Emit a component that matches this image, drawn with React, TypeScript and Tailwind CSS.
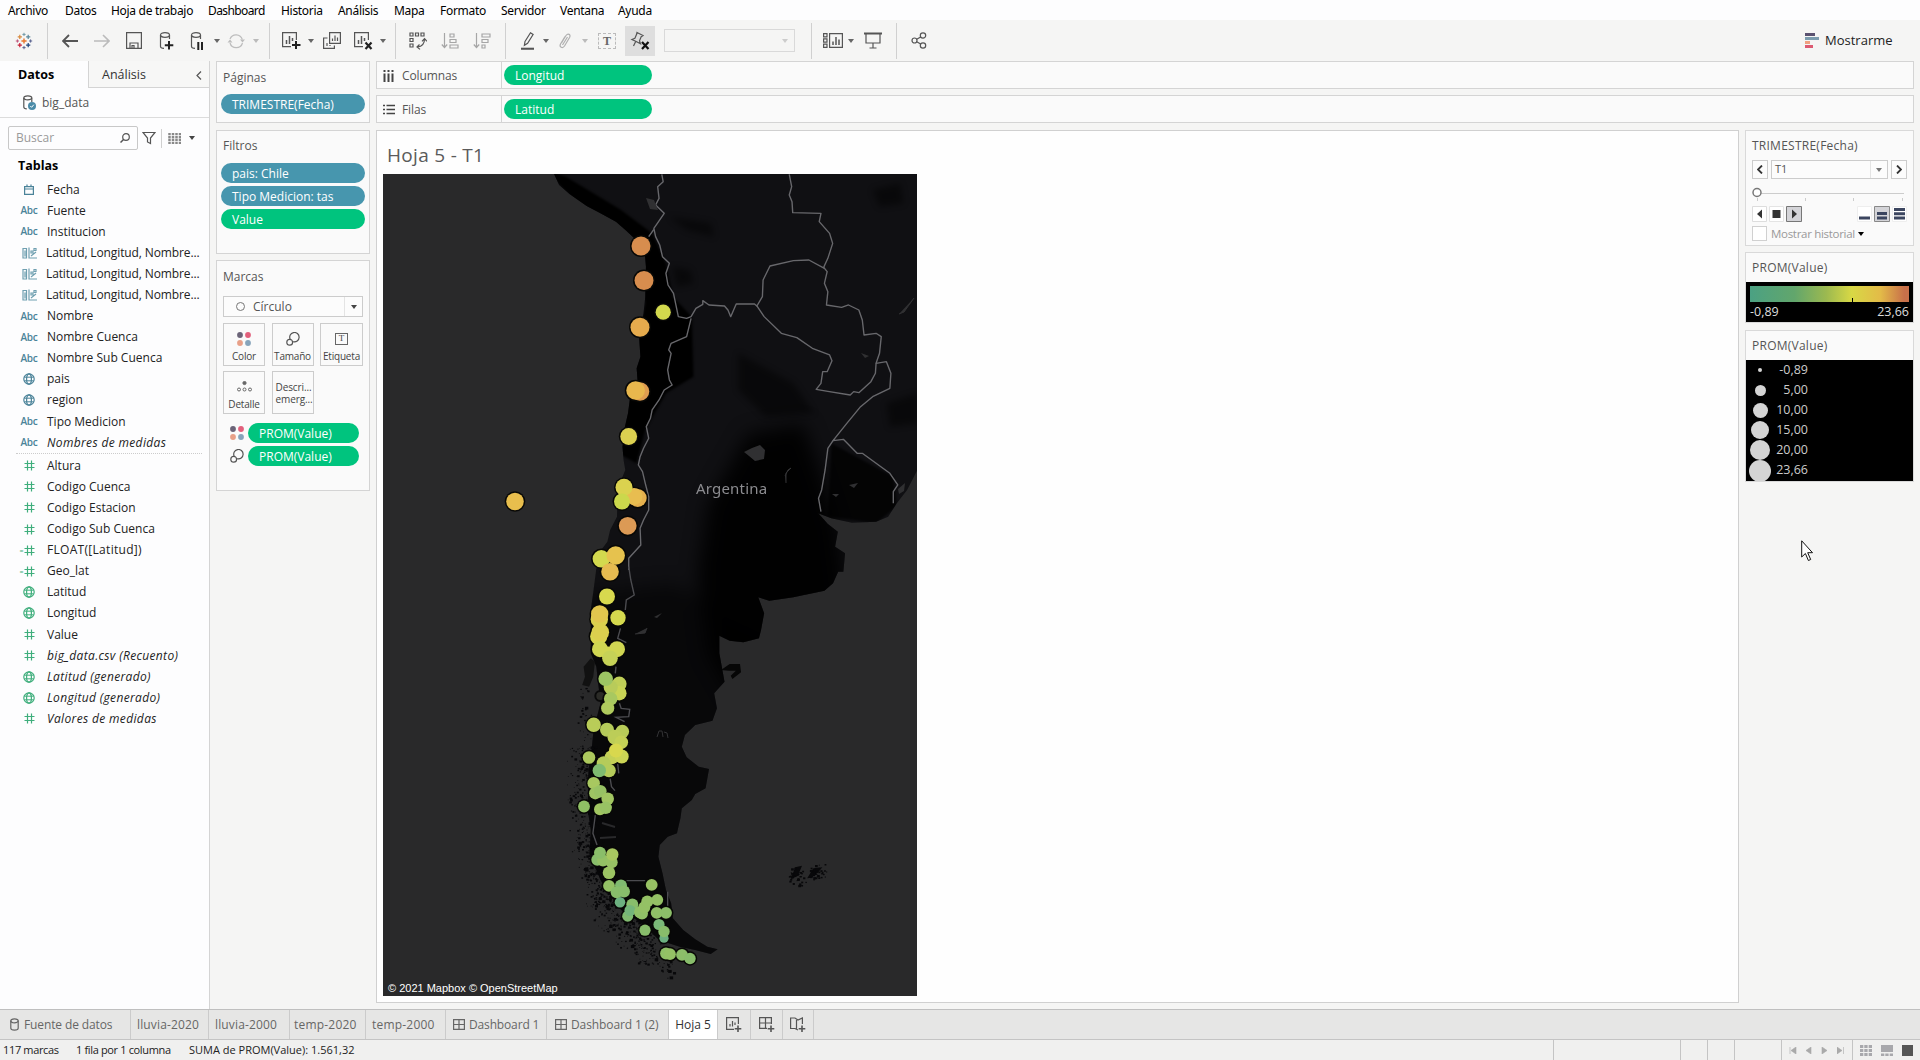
import React from 'react';

type Kids = { children?: React.ReactNode };

const Caret = ({ className = 'border-t-[#666]' }: { className?: string }) => (
  <span className={`block h-0 w-0 border-x-[3px] border-t-[4px] border-x-transparent ${className}`} />
);

const Cell = ({ className, children }: Kids & { className: string }) => (
  <div className={`flex h-full shrink-0 items-center justify-center ${className}`}>{children}</div>
);

const Sep = ({ className }: { className: string }) => (
  <div className={`h-[36px] w-px shrink-0 bg-[#d0d0d0] ${className}`} />
);

const Ico = ({ w, h, c = '#555', children }: Kids & { w: number; h: number; c?: string }) => (
  <svg width={w} height={h} viewBox={`0 0 ${w} ${h}`} fill="none" stroke={c} strokeWidth="1.2" className="shrink-0">
    {children}
  </svg>
);

const Cylinder = () => (
  <>
    <ellipse cx="6" cy="3" rx="4.5" ry="2.3" />
    <path d="M1.5 3v11.5c0 1 1.5 1.8 3.5 1.9M10.5 3v4" />
  </>
);

const TableauLogo = () => {
  const plus = (x: number, y: number, r: number, c: string, w: number) => (
    <path key={`${x}-${y}`} d={`M${x - r} ${y}h${2 * r}M${x} ${y - r}v${2 * r}`} stroke={c} strokeWidth={w} />
  );
  return (
    <Ico w={18} h={18}>
      {plus(9, 9, 2.6, '#e8762c', 1.4)}
      {plus(4.8, 4.8, 2.1, '#d8893c', 1.2)}
      {plus(13.2, 4.8, 2.1, '#59879b', 1.2)}
      {plus(4.8, 13.2, 2.1, '#c72037', 1.2)}
      {plus(13.2, 13.2, 2.1, '#1f457e', 1.2)}
      {plus(9, 2.4, 1.6, '#7199a6', 1)}
      {plus(9, 15.6, 1.6, '#5b6591', 1)}
      {plus(2.4, 9, 1.6, '#c0567a', 1)}
      {plus(15.6, 9, 1.6, '#5b6591', 1)}
    </Ico>
  );
};

const MenuBar = () => (
  <div className="flex h-[20px] shrink-0 bg-[#fdfdfe] pl-2 font-['Noto_Sans'] text-[12px] leading-[22px] tracking-[-0.3px] text-black [&>span]:shrink-0 [&>span]:whitespace-nowrap">
    <span className="w-[57px]">Archivo</span>
    <span className="w-[46px]">Datos</span>
    <span className="w-[97px]">Hoja de trabajo</span>
    <span className="w-[73px] tracking-[-0.6px]">Dashboard</span>
    <span className="w-[57px]">Historia</span>
    <span className="w-[56px]">Análisis</span>
    <span className="w-[46px]">Mapa</span>
    <span className="w-[61px]">Formato</span>
    <span className="w-[59px]">Servidor</span>
    <span className="w-[58px]">Ventana</span>
    <span>Ayuda</span>
  </div>
);

const Toolbar = () => (
  <div className="flex h-[41px] shrink-0 items-center bg-[#f5f5f4]">
    <Cell className="w-[47px]"><TableauLogo /></Cell>
    <Sep className="" />
    <Cell className="ml-[6px] w-[32px]"><Ico w={16} h={14}><path d="M1 7h15M7 1L1 7l6 6" strokeWidth="1.8" /></Ico></Cell>
    <Cell className="w-[32px]"><Ico w={16} h={14} c="#bbb"><path d="M0 7h15M9 1l6 6-6 6" strokeWidth="1.6" /></Ico></Cell>
    <Cell className="w-[32px]"><Ico w={16} h={17}><path d="M.6.6h14.8v15.8H.6zM4 16v-5h8v5M6 16v-2.5h2V16" /></Ico></Cell>
    <Cell className="w-[32px]"><Ico w={15} h={18}><Cylinder /><path d="M10 9v8.5M5.8 13.2h8.5" stroke="#222" strokeWidth="2" /></Ico></Cell>
    <Cell className="w-[30px]"><Ico w={15} h={18}><Cylinder /><path d="M8.3 10v8M12 10v8" stroke="#222" strokeWidth="2" /></Ico></Cell>
    <Cell className="w-[9px]"><Caret /></Cell>
    <Cell className="w-[30px]"><Ico w={18} h={16} c="#bdbdbd"><path d="M3 6a6.5 6.5 0 0 1 12.3.5M15.500 10A6.500 6.500 0 0 1 3 10" /><path d="M13 6.500h5l-2.500 3zM.5 9.500h5L3 6.500z" fill="#bdbdbd" stroke="none" /></Ico></Cell>
    <Cell className="w-[10px]"><Caret className="border-t-[#bbb]" /></Cell>
    <Sep className="ml-[8px]" />
    <Cell className="ml-[6px] w-[30px]"><Ico w={19} h={18}><path d="M14.400 8V.6H.6v14H9" /><path d="M4.500 12V8M7.500 12V4M10.500 9V6" strokeWidth="1.500" /><path d="M14 9v8M10 13h8.500" stroke="#222" strokeWidth="2" /></Ico></Cell>
    <Cell className="w-[10px]"><Caret /></Cell>
    <Cell className="w-[32px]"><Ico w={18} h={17}><path d="M6.600.6h10.800v10.800H6.600zM4.500 6H.6v10.400h10.800v-3" /><path d="M9.500 9V6.500M12 9V3.500M14.500 9V5.500M4 14v-3M7 14v-1" /></Ico></Cell>
    <Cell className="w-[30px]"><Ico w={19} h={18}><path d="M14.400 8V.6H.6v14H9" /><path d="M4.500 12V8M7.500 12V4M10.500 9V6" strokeWidth="1.500" /><path d="M11.500 10.500l6 6.500M17.500 10.500l-6 6.500" stroke="#222" strokeWidth="2.200" /></Ico></Cell>
    <Cell className="w-[10px]"><Caret /></Cell>
    <Sep className="ml-[7px]" />
    <Cell className="ml-[6px] w-[32px]"><Ico w={18} h={18}><path d="M1 1h3v3H1zM6.500 1h3v3h-3zM12 1h3v3h-3zM1 6.500h3v3H1zM1 12h3v3H1z" /><path d="M15.500 7c0 5-3 7.500-7 8M10.500 12.500L8 15l3 2.400M13 9.300l2.500-2.600L18 9.300" /></Ico></Cell>
    <Cell className="w-[32px]"><Ico w={18} h={16} c="#a6a6a6"><path d="M3.500 0v14M.8 11.500l2.700 3 2.700-3M9 1h4v3H9zM9 6.500h6v3H9zM9 12h8v3H9z" /></Ico></Cell>
    <Cell className="w-[32px]"><Ico w={18} h={16} c="#a6a6a6"><path d="M3.500 0v14M.8 11.500l2.700 3 2.700-3M9 1h8v3H9zM9 6.500h6v3H9zM9 12h3v3H9z" /></Ico></Cell>
    <Sep className="ml-[7px]" />
    <Cell className="ml-[8px] w-[28px]"><Ico w={14} h={18}><path d="M4 9.500L9.500.8l2.600 1.700-5.500 8.700-3.200 2zM0 16.700h13" /><path d="M0 16.700h13" strokeWidth="2" /></Ico></Cell>
    <Cell className="w-[8px]"><Caret /></Cell>
    <Cell className="w-[30px]"><Ico w={14} h={18} c="#b0b0b0"><path d="M3.500 11L8 3.500c2-2.500 5-1 3.700 1.700L6.500 14c-2 3-5.500 1-4-2L7 4.500M4.500 13l5-8" /></Ico></Cell>
    <Cell className="w-[10px]"><Caret className="border-t-[#bbb]" /></Cell>
    <Cell className="ml-[2px] w-[30px]"><span className="flex h-[16px] w-[18px] items-center justify-center border border-dashed border-[#bbb] font-['Liberation_Serif'] text-[12px] font-bold text-[#666]">T</span></Cell>
    <div className="ml-[3px] flex h-[30px] w-[30px] items-center justify-center bg-[#dedede]">
      <Ico w={20} h={20}><path d="M7 1.500l6 3-1.800 1.200-1.700 4 1 3-4.300-2.200-4.300-2 3-1.300L6.700 3zM5.700 10.500L3.500 15" /><path d="M12 11l6.500 7M18.500 11L12 18" stroke="#111" strokeWidth="2.200" /></Ico>
    </div>
    <div className="ml-[9px] flex h-[23px] w-[131px] items-center justify-end border border-[#d9d9d9] pr-[6px]"><Caret className="border-t-[#ccc]" /></div>
    <Sep className="ml-[16px]" />
    <Cell className="ml-[10px] w-[22px]"><Ico w={20} h={15}><path d="M.6.6h3.400v3.200H.6zM.6 5.900h3.400v3.200H.6zM.6 11.200h3.400v3.200H.6zM6.600.6h12.800v13.800H6.600z" /><path d="M10 12V8.500M13 12V4M16 12V6.500" strokeWidth="1.500" /></Ico></Cell>
    <Cell className="ml-[2px] w-[10px]"><Caret /></Cell>
    <Cell className="ml-[5px] w-[24px]"><Ico w={18} h={17}><path d="M0 1.500h18" strokeWidth="2" /><path d="M2 1.500v9.500h14V1.500M9 11v5M5.500 16h7" /></Ico></Cell>
    <Sep className="ml-[11px]" />
    <Cell className="ml-[13px] w-[18px]"><Ico w={16} h={17}><circle cx="3.500" cy="8.500" r="2.500" /><circle cx="12" cy="3.500" r="2.700" /><circle cx="12" cy="13.500" r="2.700" /><path d="M5.700 7.200l4-2.300M5.700 9.800l4 2.300" /></Ico></Cell>
    <div className="mr-[29px] ml-auto flex items-center gap-[6px] text-[13px] text-[#222]">
      <svg width="14" height="15"><path d="M0 0h10v3H0z" fill="#5b5270" /><path d="M0 4h14v3H0z" fill="#7c9cae" /><path d="M0 8h5v3H0z" fill="#f0a080" /><path d="M0 12h8v3H0z" fill="#dc5a72" /></svg>
      <span className="w-[66px] whitespace-nowrap">Mostrarme</span>
    </div>
  </div>
);

const GlobeIcon = ({ c }: { c: string }) => (
  <Ico w={12} h={12} c={c}><circle cx="6" cy="6" r="5.200" /><ellipse cx="6" cy="6" rx="2.400" ry="5.200" /><path d="M1.300 4.200h9.400M1.300 7.800h9.400" strokeWidth="1" /></Ico>
);

const FieldIcon = ({ kind }: { kind: string }) => {
  const blue = '#4b8399';
  const green = '#3fae7c';
  if (kind === 'abc') return <span className="text-[10px] font-semibold tracking-[-0.3px] text-[#4b8399]">Abc</span>;
  if (kind === 'date') return <Ico w={10} h={11} c={blue}><path d="M.6 2.600h8.800v7.800H.6zM.6 5h8.800M3 .5v2M7 .5v2" /></Ico>;
  if (kind === 'group') return <Ico w={15} h={12} c="#6f9fb0"><path d="M1 1.500h3.500v9.500H1zM3 3.500v6M7 .5v10.500h8M9 4h2v2H9zM12 1.500h2v2h-2zM9 9l5-4" /></Ico>;
  if (kind === 'geo') return <GlobeIcon c={blue} />;
  if (kind === 'mgeo') return <GlobeIcon c={green} />;
  const calc = kind === 'calc';
  return (
    <span className="flex items-center">
      {calc && <span className="-ml-[4px] w-[4px] text-[7px] leading-none text-[#3fae7c]">=</span>}
      <Ico w={11} h={11} c={green}><path d="M3.500.5v10M7.500.5v10M.5 3.500h10M.5 7.500h10" /></Ico>
    </span>
  );
};

const dims: [string, string][] = [
  ['date', 'Fecha'], ['abc', 'Fuente'], ['abc', 'Institucion'],
  ['group', 'Latitud, Longitud, Nombre...'], ['group', 'Latitud, Longitud, Nombre...'], ['group', 'Latitud, Longitud, Nombre...'],
  ['abc', 'Nombre'], ['abc', 'Nombre Cuenca'], ['abc', 'Nombre Sub Cuenca'],
  ['geo', 'pais'], ['geo', 'region'], ['abc', 'Tipo Medicion'], ['abc', 'Nombres de medidas'],
];
const measures: [string, string][] = [
  ['num', 'Altura'], ['num', 'Codigo Cuenca'], ['num', 'Codigo Estacion'], ['num', 'Codigo Sub Cuenca'],
  ['calc', 'FLOAT([Latitud])'], ['calc', 'Geo_lat'], ['mgeo', 'Latitud'], ['mgeo', 'Longitud'], ['num', 'Value'],
  ['num', 'big_data.csv (Recuento)'], ['mgeo', 'Latitud (generado)'], ['mgeo', 'Longitud (generado)'], ['num', 'Valores de medidas'],
];
const generated = ['Nombres de medidas', 'big_data.csv (Recuento)', 'Latitud (generado)', 'Longitud (generado)', 'Valores de medidas'];

const Field = ({ kind, name }: { kind: string; name: string }) => (
  <div className="flex h-[21.1px] items-center text-[#222]">
    <span className="flex w-[18px] justify-center"><FieldIcon kind={kind} /></span>
    <span className={`whitespace-nowrap ${kind === 'group' ? 'pl-[8px] tracking-[-0.12px]' : 'pl-[9px]'} ${name.startsWith('FLOAT') ? 'tracking-[0.3px]' : ''} ${generated.includes(name) ? 'tracking-[0.35px] italic' : ''}`}>{name}</span>
  </div>
);

const DataPane = () => (
  <div className="flex w-[210px] shrink-0 flex-col border-r border-[#d4d4d4] bg-[#fdfdfe]">
    <div className="flex h-[27px] text-[13px]">
      <div className="w-[88px] pl-[18px] text-[12.5px] leading-[28px] font-bold text-black">Datos</div>
      <div className="flex flex-1 items-center justify-between border-b border-l border-[#d4d4d4] bg-[#f7f7f6] pt-[2px] pr-[7px] pl-[13px] text-[#333]">
        <span className="text-[12.5px]">Análisis</span>
        <Ico w={6} h={9}><path d="M5 .5l-4 4 4 4" /></Ico>
      </div>
    </div>
    <div className="flex h-[30px] items-center border-b border-[#dcdcdc] pl-[23px] text-[#555]">
      <Ico w={14} h={16}><path d="M.8 3v9c0 1 1 1.800 3 1.800M8.800 3v4" /><ellipse cx="4.800" cy="2.800" rx="4" ry="2" /><circle cx="9" cy="11" r="4" fill="#4b8ba8" stroke="none" /><path d="M7.300 11l1.300 1.300 2.200-2.600" stroke="#fff" strokeWidth="1" /></Ico>
      <span className="pl-[5px]">big_data</span>
    </div>
    <div className="mt-[8px] flex h-[24px] items-center pl-[8px]">
      <div className="flex h-[24px] w-[130px] items-center justify-between rounded-[2px] border border-[#c8c8c8] px-[7px] text-[#9a9a9a]">
        <span>Buscar</span>
        <Ico w={10} h={10}><circle cx="6" cy="4" r="3.300" /><path d="M3.500 6.500L.5 9.500" strokeWidth="1.500" /></Ico>
      </div>
      <div className="ml-[4px]"><Ico w={14} h={14}><path d="M1 1.500h12L8.500 7v5.500l-3-1.500V7z" /></Ico></div>
      <div className="ml-[5px] h-[19px] w-px bg-[#d0d0d0]" />
      <div className="ml-[6px]"><Ico w={13} h={11} c="#888"><path d="M1.500 0v11M5 0v11M8.500 0v11M12 0v11" strokeWidth="2.500" strokeDasharray="2.300 .6" /></Ico></div>
      <div className="ml-[8px]"><Caret className="border-t-[#444]" /></div>
    </div>
    <div className="h-[29px] pl-[18px] text-[12.5px] leading-[32px] font-bold text-black">Tablas</div>
    <div className="ml-[20px]">{dims.map(([k, n], i) => <Field key={i} kind={k} name={n} />)}</div>
    <div className="mr-[7px] ml-[16px] h-[2px] border-t border-dotted border-[#ccc]" />
    <div className="ml-[20px]">{measures.map(([k, n], i) => <Field key={i} kind={k} name={n} />)}</div>
  </div>
);

const Pill = ({ blue, className = '', children }: Kids & { blue?: boolean; className?: string }) => (
  <div className={`flex h-[20px] items-center rounded-full pt-px pl-[11px] font-medium whitespace-nowrap text-white ${blue ? 'bg-[#4796ae]' : 'bg-[#00c47e]'} ${className}`}>{children}</div>
);

const ColorDots = () => (
  <svg width="14" height="14"><circle cx="3" cy="3" r="2.900" fill="#6b6478" /><circle cx="11" cy="3" r="2.900" fill="#e2607c" /><circle cx="3" cy="11" r="2.900" fill="#e8a088" /><circle cx="11" cy="11" r="2.900" fill="#86a4bb" /></svg>
);
const SizeIcon = () => (
  <Ico w={14} h={14}><path d="M4.200 7.200a4.700 4.700 0 1 1 3 2.500" /><circle cx="3.700" cy="10.300" r="2.900" /></Ico>
);

const MarkButton = ({ label, children }: Kids & { label: string }) => (
  <div className="flex h-[43px] flex-col items-center justify-between border border-[#ccc] pt-[7px] pb-[1px] text-[10px] text-[#444]">
    <div className="flex h-[15px] items-center">{children}</div>
    <span className="tracking-[-0.2px]">{label}</span>
  </div>
);

const Cards = () => (
  <div className="flex w-[166px] shrink-0 flex-col pl-[6px] text-[#555]">
    <div className="h-[62px] w-[154px] border border-[#d4d4d4] bg-[#fafafa] px-[4px]">
      <div className="h-[32px] pl-[2px] leading-[31px]">Páginas</div>
      <Pill blue>TRIMESTRE(Fecha)</Pill>
    </div>
    <div className="mt-[7px] h-[124px] w-[154px] border border-[#d4d4d4] bg-[#fafafa] px-[4px]">
      <div className="h-[32px] pl-[2px] leading-[30px]">Filtros</div>
      <div className="flex flex-col gap-[3px]">
        <Pill blue>pais: Chile</Pill>
        <Pill blue>Tipo Medicion: tas</Pill>
        <Pill>Value</Pill>
      </div>
    </div>
    <div className="mt-[6px] h-[231px] w-[154px] border border-[#d4d4d4] bg-[#fafafa] px-[6px]">
      <div className="h-[35px] leading-[31px]">Marcas</div>
      <div className="flex h-[21px] items-center border border-[#ccc] bg-[#fcfcfc]">
        <span className="ml-[12px] h-[9px] w-[9px] rounded-full border border-[#777]" />
        <span className="ml-[8px]">Círculo</span>
        <span className="ml-auto flex h-full w-[18px] items-center justify-center border-l border-[#e4e4e4]"><Caret className="border-t-[#444]" /></span>
      </div>
      <div className="mt-[6px] grid grid-cols-[42px_42px_43px] gap-x-[6.500px] gap-y-[5px]">
        <MarkButton label="Color"><ColorDots /></MarkButton>
        <MarkButton label="Tamaño"><SizeIcon /></MarkButton>
        <MarkButton label="Etiqueta"><span className="flex h-[12px] w-[13px] items-center justify-center border border-[#666] font-['Liberation_Serif'] text-[9px]">T</span></MarkButton>
        <MarkButton label="Detalle"><svg width="15" height="11" fill="none" stroke="#666"><circle cx="7.500" cy="2" r="1.600" fill="#666" /><circle cx="2" cy="8.500" r="1.500" /><circle cx="7.500" cy="8.500" r="1.500" /><circle cx="13" cy="8.500" r="1.500" /></svg></MarkButton>
        <div className="flex h-[43px] flex-col justify-center border border-[#ccc] pl-[3px] text-[10px] leading-[12px] tracking-[-0.1px] text-[#444]"><span>Descri...</span><span>emerg...</span></div>
      </div>
      <div className="mt-[9px] flex flex-col gap-[3px] pl-[7px]">
        <div className="flex items-center gap-[4px]"><ColorDots /><Pill className="w-[111px]">PROM(Value)</Pill></div>
        <div className="flex items-center gap-[4px]"><SizeIcon /><Pill className="w-[111px]">PROM(Value)</Pill></div>
      </div>
    </div>
  </div>
);

const Shelf = ({ label, value, icon, className = '' }: { label: string; value: string; icon: React.ReactNode; className?: string }) => (
  <div className={`flex h-[28px] items-center border border-[#d4d4d4] bg-[#fafafa] text-[#555] ${className}`}>
    <div className="flex h-full w-[125px] items-center border-r border-[#d4d4d4] pt-px pl-[6px]">
      <span className="w-[19px]">{icon}</span><span className="tracking-[-0.1px]">{label}</span>
    </div>
    <Pill className="ml-[2px] w-[148px]">{value}</Pill>
  </div>
);

/* Marks: x, y, radius, fill */
const marks: [number, number, number, string][] = [
  [258, 71.500, 9.500, '#d78d4e'], [261, 106, 9.500, '#d78d4e'], [280.200, 137.700, 7.600, '#d3d94d'], [257, 152.700, 9.500, '#e6ab4d'],
  [257, 217, 9.300, '#df9d50'], [252.600, 216, 9.300, '#e8b74d'], [245.700, 262, 8.400, '#dcd050'], [132, 327, 8.800, '#e8be4d'],
  [254.700, 323.500, 9, '#e5b04e'], [251, 322, 8.500, '#e8bd50'], [241, 312.700, 8.500, '#dbd24f'], [239, 327, 8, '#cbd84c'],
  [244.700, 351.300, 8.900, '#dc9a55'], [218.300, 384.300, 8.700, '#d3d94e'], [232.700, 381, 9.200, '#e6c24e'], [227, 397.300, 8.800, '#e6bb50'],
  [224, 422, 8, '#d8d94e'], [216.300, 444.700, 8.700, '#dcd04e'], [216.700, 439.500, 8.700, '#e2c64e'], [235, 443.300, 7.700, '#d5d94e'],
  [215.700, 462, 8.600, '#d9d64e'], [217.300, 457.700, 8.800, '#dccf4e'], [217, 474.700, 8, '#d0d652'], [225, 479, 7, '#d0d652'],
  [234, 474.700, 8, '#d0d652'], [227, 483.700, 7.800, '#c6d257'], [236.300, 509.300, 7.300, '#c0cf58'], [236.300, 518.700, 7.300, '#c8d455'],
  [227.700, 512.700, 7, '#b8cb5a'], [222.700, 504.300, 7.300, '#9cc463'], [227.700, 524.300, 6.800, '#a8c860'], [224.700, 533.700, 6.600, '#afca5d'],
  [210.700, 550.300, 7.200, '#b9cc58'], [224, 555.300, 7, '#b5cb5a'], [239.300, 557, 6.800, '#b8cc58'], [232, 562.700, 7.500, '#bccd58'],
  [238.300, 567.700, 6.800, '#c4d156'], [228.700, 582.700, 7, '#c4d156'], [238.700, 582, 7, '#cbd455'], [233, 576, 7, '#d8d84e'],
  [220.700, 588.700, 7, '#b5cb5a'], [206, 583, 6.300, '#acc85d'], [226, 596, 6.800, '#b5cb5a'], [216.300, 596, 6.700, '#7fbb70'],
  [210.700, 608.700, 6.200, '#a8c860'], [212.300, 618.700, 6.200, '#9ec463'], [217.300, 616.700, 6.300, '#98c264'], [224.700, 624.300, 6.300, '#a2c662'],
  [201, 632, 5.900, '#8fbf64'], [217, 634.700, 6, '#a2c662'], [222.700, 633.300, 6.200, '#98c264'], [214.300, 685.300, 6, '#88bd6b'],
  [220, 686, 6, '#94c165'], [217, 678.300, 6, '#8abe69'], [228.700, 687.700, 6, '#98c264'], [229.300, 680, 6.200, '#a8c860'],
  [226, 698.300, 6.300, '#9cc463'], [226, 711.300, 5.900, '#94c165'], [237, 727.700, 5.300, '#6cb080'], [238, 711, 6, '#80ba70'],
  [233.700, 717.700, 6, '#88bd6b'], [241, 717, 6, '#88bd6b'], [268.700, 710.300, 5.900, '#98c264'], [244.700, 741.700, 5.500, '#80ba70'],
  [249.300, 730, 6, '#88bd6b'], [247, 736, 5.600, '#74b57a'], [257, 737.700, 6, '#90c067'], [259, 739, 6, '#90c067'],
  [261.300, 732.700, 6, '#94c165'], [264.300, 727, 6, '#94c165'], [274.300, 725.300, 5.900, '#94c165'], [273.700, 738.300, 5.900, '#90c067'],
  [283, 738.300, 5.900, '#8cbe69'], [276, 750, 5.600, '#7ab878'], [281, 763.700, 4.600, '#6cb080'], [281, 757, 5.700, '#88bd6b'],
  [262, 755.700, 5.600, '#88bd6b'], [283, 779, 5.900, '#90c067'], [287, 779.700, 5.900, '#94c165'], [299, 780.300, 5.900, '#8cbe69'], [307, 784, 5.700, '#88bd6b'],
];

/* Small islands scattered along the fjords: deterministic noise around a centre line */
const fjord: [number, number, number][] = [
  [200, 530, 6], [200, 558, 14], [201, 590, 17], [201, 625, 19], [204, 660, 19], [209, 690, 16], [217, 715, 17], [228, 740, 19], [247, 757, 20], [264, 772, 18], [284, 786, 10],
];
const islets = (() => {
  let s = 7;
  const rnd = () => (s = (s * 16807) % 2147483647) / 2147483647;
  const out: [number, number, number][] = [];
  fjord.forEach(([x, y, spread], i) => {
    const n = i < 2 ? 18 : i === fjord.length - 1 ? 30 : 105;
    for (let k = 0; k < n; k++) {
      out.push([x + (rnd() + rnd() - 1) * spread, y + (rnd() - 0.5) * 36, 0.6 + rnd() * rnd() * 2.6]);
    }
  });
  for (let k = 0; k < 70; k++) {
    const west = k % 2 === 0;
    out.push([(west ? 413 : 434) + (rnd() + rnd() - 1) * 11, 699 + (rnd() + rnd() - 1) * 10 + (west ? 3 : 0), 0.8 + rnd() * 1.6]);
  }
  return out;
})();

const MapView = () => (
  <div className="relative h-[822px] w-[534px] overflow-hidden bg-[#29292a]">
    <svg width="534" height="822" viewBox="0 0 534 822" fill="none">
      <defs>
        <filter id="soft" x="-20%" y="-20%" width="140%" height="140%"><feGaussianBlur stdDeviation="2.5" /></filter>
        <filter id="softer" x="-30%" y="-30%" width="160%" height="160%"><feGaussianBlur stdDeviation="9" /></filter>
        <clipPath id="land">
          <path transform="translate(-3 -4) scale(.3445 .3333)" d="M500,0L520,45 550,72 600,108 640,130 685,155 715,182 738,205 768,240 772,290 770,380 765,430 752,500 756,560 745,595 749,650 725,690 720,730 711,770 704,830 707,870 712,900 698,935 689,990 688,1040 668,1080 660,1115 635,1150 628,1205H1345L1350,1150 1321,1130 1329,1085 1300,1062 1272,1030 1310,1045 1370,1058 1440,1055 1475,1040 1500,1000 1530,960 1560,900V0Z" />
          <path transform="translate(-3 396) scale(.3445 .3333)" d="M628,-5L620,60 612,120 612,250 628,290 640,400 620,480 612,560 605,600 603,720 612,780 608,850 640,930 665,970 700,1020 760,1060 810,1110 870,1130 915,1140 960,1152 980,1138 950,1130 915,1108 880,1080 850,1045 845,1000 830,960 820,910 808,860 812,825 835,800 862,790 868,762 872,745 876,715 905,690 915,672 945,655 955,597 925,590 890,562 876,530 885,495 915,465 965,452 978,415 970,370 1000,335 985,250 985,197 1015,212 1055,217 1100,205 1106,180 1115,130 1098,82 1130,92 1200,82 1290,62 1315,40 1332,0 1345,-5Z" />
        </clipPath>
      </defs>
      <g clipPath="url(#land)">
        <path d="M0 0h534v822H0z" fill="#101013" />
        <g fill="#020203" filter="url(#softer)">
          <path d="M325 330l40-70 55-10 15 40 20 60 15 120-110 70-35-60-10-80z" opacity=".9" />
          <path d="M200 420l90-10 130 60-60 60-20 270H190z" opacity=".5" />
        </g>
        <g transform="translate(-3 -4) scale(.3445 .3333)">
          <g fill="#020202" filter="url(#soft)">
            <path d="M480 0L540 20 700 120 790 190 830 280 850 380 905 440 910 620 830 670 770 780 745 880 690 850 740 560 770 400 740 210 600 130z" />
            <path d="M1310 820l180 100 10 90-60 50-140-20z" opacity=".75" />
          </g>
          <g fill="#020202" filter="url(#softer)" opacity=".45">
            <path d="M850 290l50 10 10 40-50 10zM1040 550l160 90 60 90-140 10-80-80zM840 140l120 20 10 40-80-20zM1430 60l80-20 10 60-70 10zM1470 700l90-30v90l-80 10z" />
          </g>
        </g>
      </g>
      <g transform="translate(-3 396) scale(.3445 .3333)">
        <path d="M990 300l25-18 30 0 3 25-25 20-5-10 15-15-20 0z" fill="#060606" />
        <path d="M612 265l12 10-5 45-12 30-20-5 8-25-4-30z" fill="#111" />
        <path d="M1205 892l20-5-12 30-20 10M1240 925l18-30 26-3-12 15-20 16z" fill="#08080a" />
      </g>
      {islets.map(([x, y, r], i) => <rect key={i} x={x} y={y} width={r * 1.200} height={r} fill="#08080a" />)}
      <g transform="translate(-3 -4) scale(.3445 .3333)" stroke="#68686c" strokeWidth="4" strokeLinejoin="round">
        <path d="M818,13L822,35 806,50 810,85 800,105 825,130 795,175 800,200 812,225 820,260 840,280 830,310 836,345 852,370 866,440 890,445 903,440 917,415 937,403 937,392 955,405 1000,408 1010,420 1018,440 1034,402 1087,402 1094,408 1110,380 1112,330 1132,288 1200,272 1245,270 1290,295" />
        <path d="M795,178L780,200M903,445L890,500 845,520 838,540 845,550 835,600 840,630 848,645 825,660 810,690 790,720 785,745 773,770 780,805 765,835 755,860 750,885 762,905 770,940 780,980 780,1020 765,1050 755,1075 757,1125 722,1165 722,1200" />
        <path d="M1188,13L1195,50 1188,75 1196,95 1198,128 1280,130 1275,155 1305,190 1314,220 1300,265 1288,292 1298,305 1290,340 1300,365 1296,405 1340,412 1360,405 1390,420 1400,450 1405,495 1440,490 1455,500 1450,550 1440,580 1470,575 1483,610 1480,655 1430,680 1395,710 1355,760 1315,812 1345,808 1385,850 1400,850 1440,880 1480,910 1503,945 1490,965 1490,1000" />
        <path d="M1094,408L1115,440 1165,490 1210,503 1255,535 1305,555 1312,572 1298,605 1285,605 1280,640 1266,658 1300,664 1365,675 1375,665 1390,668 1425,635 1438,610 1440,580M1315,812L1300,835 1292,900 1282,960 1273,985 1280,1025" />
      </g>
      <g transform="translate(-3 396) scale(.3445 .3333)" stroke="#4c4c50" strokeWidth="4">
        <path d="M722,-10L728,30 738,75 715,90 712,120M698,175L690,205 715,218M685,290L683,310M695,400L700,415 725,418 722,440 685,442 710,455M668,625L672,650 682,662M625,735L618,790 630,825M692,932L770,932M835,965L835,1010M690,580L693,610" />
      </g>
      <g fill="#303032">
        <path d="M361 278l8-4 8-3 5 5-1 9-9 2-6-5zM263 24l8 2 4 10-8-1zM478 179l8 3-4 2zM466 311l9-2-4 5zM449 320l7 0-3 3zM515 315l7-6-1 8-5 3zM271 443l8-4-5 5z" />
        <path d="M402 302l3-6 3-2-5 5 0 10M516 140l5-2 10-14M252 460l10-1 2-5" stroke="#333335" />
        <path d="M274 563l2-6 3 0 1 6M281 558l3 1 1 5" stroke="#333335" fill="none" />
        <path d="M219 649l13 4M217 664l16-1" stroke="#29292b" strokeWidth="2" />
      </g>
      <circle cx="217.300" cy="522" r="5" fill="#2b2b27" stroke="#0a0a0a" strokeWidth="2" />
      {marks.map(([x, y, r], i) => <circle key={i} cx={x} cy={y + 0.5} r={r + 1.500} fill="#080806" />)}
      {marks.map(([x, y, r, f], i) => <circle key={i} cx={x} cy={y + 0.5} r={r} fill={f} />)}
    </svg>
    <span className="absolute top-[304px] left-[313px] font-['Noto_Sans'] text-[15px] leading-[20px] tracking-[0.2px] text-[#8c8c90]">Argentina</span>
    <span className="absolute bottom-[1px] left-[5px] font-['Liberation_Sans'] text-[11px] leading-[14px] whitespace-nowrap text-white">© 2021 Mapbox © OpenStreetMap</span>
  </div>
);

const NavBtn = ({ d }: { d: string }) => (
  <div className="flex w-[16px] items-center justify-center border border-[#ccc] bg-[#fcfcfc]">
    <Ico w={6} h={9} c="#333"><path d={d} strokeWidth="1.800" /></Ico>
  </div>
);

const sizes: [number, string][] = [[4, '-0,89'], [11, '5,00'], [15, '10,00'], [18, '15,00'], [20, '20,00'], [22, '23,66']];

const RightPane = () => (
  <div className="flex w-[169px] shrink-0 flex-col text-[#555]">
    <div className="h-[116px] border border-[#d9d9d9] bg-[#fafafa] px-[6px]">
      <div className="h-[29px] leading-[29px]"><span className="tracking-[0.25px]">TRIMESTRE(Fecha)</span></div>
      <div className="flex h-[19px] gap-[3px]">
        <NavBtn d="M5 .5l-4 4 4 4" />
        <div className="flex flex-1 items-center border border-[#ccc] bg-[#fcfcfc] pl-[3px] text-[11px]">
          T1
          <span className="ml-auto flex h-full w-[17px] items-center justify-center border-l border-[#e4e4e4]"><Caret className="border-t-[#777]" /></span>
        </div>
        <NavBtn d="M1 .5l4 4-4 4" />
      </div>
      <svg width="155" height="27" className="block" fill="none" stroke="#ccc"><path d="M5 14.500h147M5.500 19v3M53.500 19v3M101.500 19v3M150.500 19v3" /><circle cx="5" cy="13.500" r="4" fill="#fff" stroke="#777" strokeWidth="1.500" /></svg>
      <div className="flex h-[16px] items-center">
        <svg width="15" height="16"><path d="M.5.5h14v15H.5z" fill="#fff" stroke="#ddd" /><path d="M10 3.500v9L5 8z" fill="#333" /></svg>
        <svg width="15" height="16" className="ml-[2px]"><path d="M.5.5h14v15H.5z" fill="#fff" stroke="#e4e4e4" /><path d="M3.500 4h8v8h-8z" fill="#333" /></svg>
        <svg width="16" height="16" className="ml-[2px]"><path d="M.5.5h15v15H.5z" fill="#d4d4d8" stroke="#777" /><path d="M6 3.500v9L11 8z" fill="#333" /></svg>
        <svg width="15" height="16" className="ml-auto"><path d="M.5.5h14v15H.5z" fill="#fff" stroke="#eee" /><path d="M2 10.500h11v3H2z" fill="#3c4660" /></svg>
        <svg width="16" height="16" className="ml-[2px]"><path d="M.5.5h15v15H.5z" fill="#d4d4d8" stroke="#888" /><path d="M3 6h10v3H3zM3 10.500h10v3H3z" fill="#3c4660" /></svg>
        <svg width="15" height="16" className="ml-[2px]"><path d="M.5.5h14v15H.5z" fill="#fff" stroke="#eee" /><path d="M2 2h11v3H2zM2 6.300h11v3H2zM2 10.500h11v3H2z" fill="#3c4660" /></svg>
      </div>
      <div className="mt-[4px] flex h-[15px] items-center text-[#999]">
        <span className="h-[15px] w-[15px] border border-[#d0d0d0] bg-white" />
        <span className="ml-[4px] w-[87px] text-[11.5px] tracking-[-0.3px] whitespace-nowrap">Mostrar historial</span>
        <Caret className="border-x-[3.5px] border-t-black" />
      </div>
    </div>
    <div className="mt-[6px] h-[71px] border border-[#d9d9d9] bg-[#fafafa]">
      <div className="h-[29px] pl-[6px] leading-[30px]"><span className="tracking-[0.25px]">PROM(Value)</span></div>
      <div className="h-[40px] bg-black px-[4px] pt-[4px] text-[12.5px] text-[#ddd]">
        <div className="flex h-[16px] items-end bg-[linear-gradient(90deg,#4ba183_0%,#62a66c_28%,#9cb950_48%,#d8d845_64%,#e3bb48_82%,#c8704a_97%)]"><span className="ml-[102px] h-[4px] w-px bg-black" /></div>
        <div className="flex justify-between leading-[20px]"><span>-0,89</span><span>23,66</span></div>
      </div>
    </div>
    <div className="mt-[7px] h-[152px] border border-[#d9d9d9] bg-[#fafafa]">
      <div className="h-[29px] pl-[6px] leading-[30px]"><span className="tracking-[0.25px]">PROM(Value)</span></div>
      <div className="h-[121px] overflow-hidden bg-black text-[12.5px] text-[#ccc]">
        {sizes.map(([d, t]) => (
          <div key={t} className="flex h-[20.100px] items-center overflow-hidden">
            <span className="flex w-[28px] shrink-0 justify-center"><span className="shrink-0 rounded-full bg-[#d4d4d4]" style={{ width: d, height: d }} /></span>
            <span className="w-[34px] text-right whitespace-nowrap">{t}</span>
          </div>
        ))}
      </div>
    </div>
  </div>
);

const GridIcon = () => <Ico w={12} h={11} c="#666"><path d="M.6.6h10.800v9.800H.6zM6 .6v9.800M.6 5.500h10.800" /></Ico>;
const Tab = ({ className, children }: Kids & { className: string }) => (
  <div className={`flex h-full shrink-0 items-center border-r border-[#cbcbcb] whitespace-nowrap ${className}`}>{children}</div>
);

const SheetTabs = () => (
  <div className="flex h-[30px] shrink-0 items-center border-t border-[#bfbfbf] bg-[#e6e6e5] text-[#666]">
    <Tab className="w-[131px] pl-[10px]"><Ico w={9} h={13} c="#666"><ellipse cx="4.500" cy="2.800" rx="3.700" ry="2" /><path d="M.8 2.800v7.400c0 2.500 7.400 2.500 7.400 0V2.800" /></Ico><span className="pl-[5px] tracking-[-0.12px]">Fuente de datos</span></Tab>
    <Tab className="w-[78px] pl-[6px]"><span className="tracking-[0.15px]">lluvia-2020</span></Tab>
    <Tab className="w-[81px] pl-[6px]"><span className="tracking-[0.15px]">lluvia-2000</span></Tab>
    <Tab className="w-[76px] pl-[4px]"><span className="tracking-[0.2px]">temp-2020</span></Tab>
    <Tab className="w-[80px] pl-[6px]"><span className="tracking-[0.2px]">temp-2000</span></Tab>
    <Tab className="w-[101px] pl-[7px]"><GridIcon /><span className="pl-[4px] tracking-[-0.15px]">Dashboard 1</span></Tab>
    <Tab className="w-[122px] pl-[8px]"><GridIcon /><span className="pl-[4px] tracking-[-0.1px]">Dashboard 1 (2)</span></Tab>
    <Tab className="w-[49px] justify-center bg-white font-medium text-[#333]">Hoja 5</Tab>
    <Tab className="w-[33px] justify-center"><Ico w={16} h={15}><path d="M12.400 7V.6H.6v11.800H8M4 9.500V7M6.500 9.500V4M9 8V5.500" /><path d="M12 8.500v6.500M8.700 11.800h6.600" strokeWidth="1.600" /></Ico></Tab>
    <Tab className="w-[32px] justify-center"><Ico w={16} h={15}><path d="M12.400 7V.6H.6v10.800H8M6.500.6v10.800M.6 6h11.800" /><path d="M12 8.500v6.500M8.700 11.800h6.600" strokeWidth="1.600" /></Ico></Tab>
    <Tab className="w-[31px] justify-center"><Ico w={16} h={15}><path d="M12.400 7V1L8 3 5 1 .6 1v10.500L5 11.500 8 13M6.500 3v9" /><path d="M12 8.500v6.500M8.700 11.800h6.600" strokeWidth="1.600" /></Ico></Tab>
  </div>
);

const StatusBar = () => (
  <div className="flex h-[21px] shrink-0 items-center border-t border-[#c4c4c4] bg-[#f0f0ef] pl-[3px] text-[11px] whitespace-nowrap text-[#222]">
    <span className="w-[73px] tracking-[-0.35px]">117 marcas</span>
    <span className="w-[113px] tracking-[-0.35px]">1 fila por 1 columna</span>
    <span className="tracking-[0px]">SUMA de PROM(Value): 1.561,32</span>
    <div className="ml-auto flex h-full [&>div]:h-full [&>div]:border-l [&>div]:border-[#c4c4c4]">
      <div className="w-[127px]" /><div className="w-[27px]" /><div className="w-[27px]" /><div className="w-[47px]" />
      <div className="flex w-[71px] items-center justify-around px-[3px]">
        {['M1 0v7M7 0v7L2 3.500z', 'M6 0v7L1 3.500z', 'M1 0v7l5-3.500z', 'M0 0v7l5-3.500zM6.500 0v7'].map((d) => <svg key={d} width="8" height="7" fill="#aaa" stroke="#aaa" strokeWidth=".6"><path d={d} /></svg>)}
      </div>
      <div className="flex w-[68px] items-center gap-[9px] pl-[7px]">
        <svg width="12" height="11" fill="#a8a8ac"><path d="M0 0h3.300v3H0zM4.300 0h3.300v3H4.300zM8.700 0H12v3H8.700zM0 4h3.300v3H0zM4.300 4h3.300v3H4.300zM8.700 4H12v3H8.700zM0 8h3.300v3H0zM4.300 8h3.300v3H4.300zM8.700 8H12v3H8.700z" /></svg>
        <svg width="12" height="11" fill="#a8a8ac"><path d="M0 0h12v7H0zM0 8.500h3.300V11H0zM4.300 8.500h3.300V11H4.300zM8.700 8.500H12V11H8.700z" /></svg>
        <span className="h-[11px] w-[11px] bg-[#555]" />
      </div>
    </div>
  </div>
);

export default function App() {
  return (
    <div className="relative flex h-[1060px] w-[1920px] flex-col overflow-hidden bg-[#f5f5f4] font-['Open_Sans',sans-serif] text-[12px]">
      <MenuBar />
      <Toolbar />
      <div className="flex min-h-0 flex-1">
        <DataPane />
        <Cards />
        <div className="flex min-w-0 flex-1 flex-col">
          <Shelf className="mr-[6px]" label="Columnas" value="Longitud" icon={<Ico w={12} h={12} c="#444"><path d="M1.500 0v2M1.500 3.500v9M5.500 0v2M5.500 3.500v9M9.500 0v2M9.500 3.500v9" strokeWidth="2" /></Ico>} />
          <Shelf className="mt-[6px] mr-[6px]" label="Filas" value="Latitud" icon={<Ico w={12} h={11} c="#444"><path d="M0 1.500h2M3.500 1.500h9M0 5.500h2M3.500 5.500h9M0 9.500h2M3.500 9.500h9" strokeWidth="1.700" /></Ico>} />
          <div className="mt-[7px] flex gap-[6px]">
            <div className="h-[873px] w-[1363px] border border-[#d0d0d0] bg-[#fefefe] pl-[6px]">
              <div className="h-[43px] pl-[4px] text-[19px] leading-[49px] tracking-[0.3px] text-[#5a5a5a]">Hoja 5 - T1</div>
              <MapView />
            </div>
            <RightPane />
          </div>
        </div>
      </div>
      <SheetTabs />
      <StatusBar />
      <svg className="absolute top-[540px] left-[1801px]" width="12" height="22" viewBox="0 0 12 22"><path d="M.7.8v16.200l3.700-3.500 3 7 2.300-1-3-6.800h4.800z" fill="#fff" stroke="#111" strokeWidth="1" /></svg>
    </div>
  );
}
